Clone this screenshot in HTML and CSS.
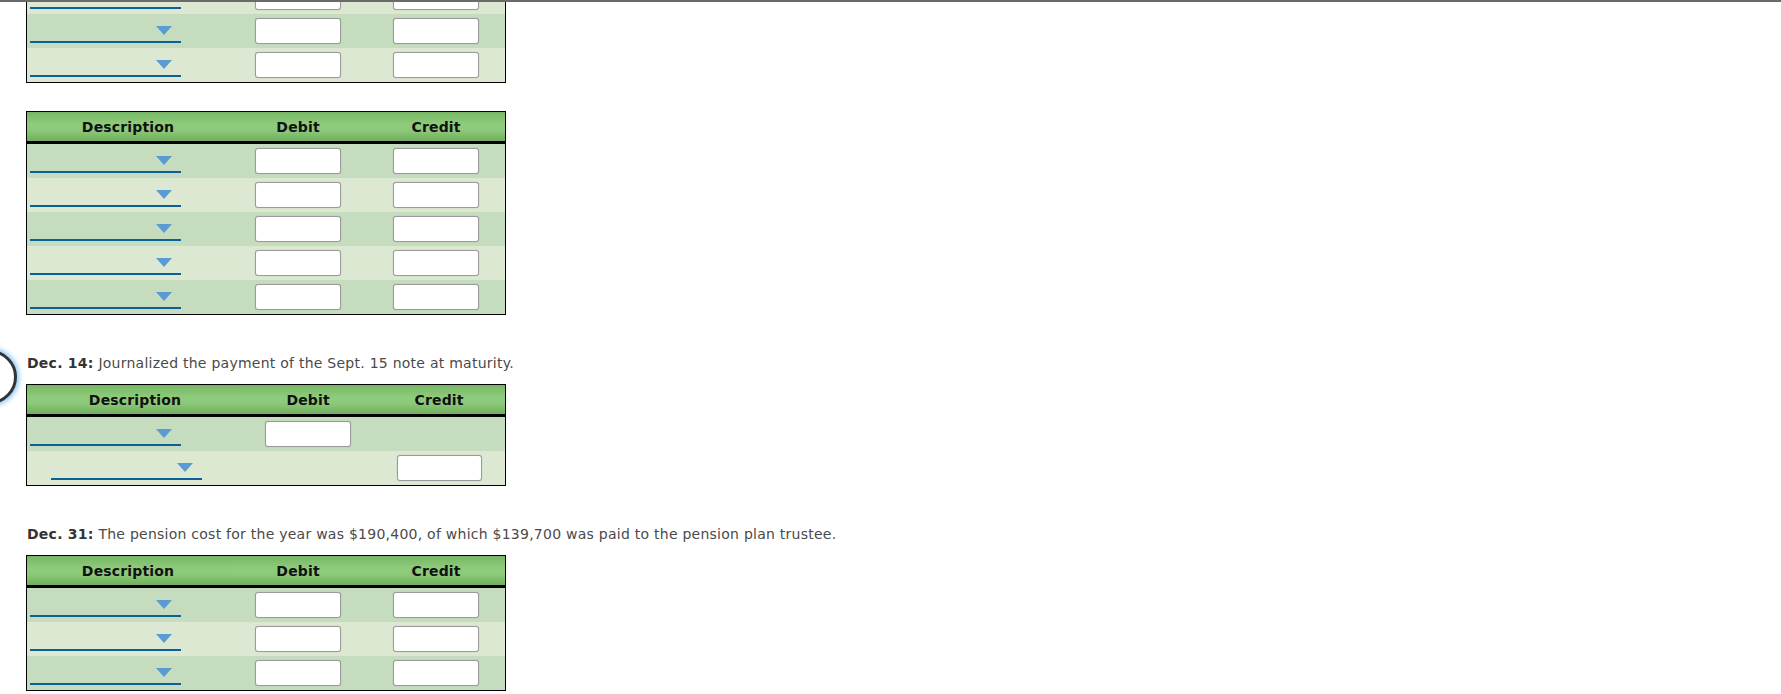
FILE: index.html
```html
<!DOCTYPE html>
<html>
<head>
<meta charset="utf-8">
<link rel="stylesheet" href="styles.css">
</head>
<body>
<div class="topline"></div>
<div class="page">
  <section class="entry first">
    <table class="journal">
      <colgroup><col class="c-desc"><col class="c-amt"><col class="c-amt"></colgroup>
      <tbody>
        <tr class="dark"><td class="desc"><div class="dd"><span class="arrow"></span></div></td><td><div class="inp"></div></td><td><div class="inp"></div></td></tr>
        <tr class="light"><td class="desc"><div class="dd"><span class="arrow"></span></div></td><td><div class="inp"></div></td><td><div class="inp"></div></td></tr>
        <tr class="dark"><td class="desc"><div class="dd"><span class="arrow"></span></div></td><td><div class="inp"></div></td><td><div class="inp"></div></td></tr>
        <tr class="light"><td class="desc"><div class="dd"><span class="arrow"></span></div></td><td><div class="inp"></div></td><td><div class="inp"></div></td></tr>
      </tbody>
    </table>
  </section>

  <section class="entry gap-small">
    <table class="journal">
      <colgroup><col class="c-desc"><col class="c-amt"><col class="c-amt"></colgroup>
      <thead><tr><th>Description</th><th>Debit</th><th>Credit</th></tr></thead>
      <tbody>
        <tr class="dark"><td class="desc"><div class="dd"><span class="arrow"></span></div></td><td><div class="inp"></div></td><td><div class="inp"></div></td></tr>
        <tr class="light"><td class="desc"><div class="dd"><span class="arrow"></span></div></td><td><div class="inp"></div></td><td><div class="inp"></div></td></tr>
        <tr class="dark"><td class="desc"><div class="dd"><span class="arrow"></span></div></td><td><div class="inp"></div></td><td><div class="inp"></div></td></tr>
        <tr class="light"><td class="desc"><div class="dd"><span class="arrow"></span></div></td><td><div class="inp"></div></td><td><div class="inp"></div></td></tr>
        <tr class="dark"><td class="desc"><div class="dd"><span class="arrow"></span></div></td><td><div class="inp"></div></td><td><div class="inp"></div></td></tr>
      </tbody>
    </table>
  </section>

  <section class="entry gap-large with-marker">
    <div class="marker"></div>
    <p class="prompt"><b>Dec. 14:</b> Journalized the payment of the Sept. 15 note at maturity.</p>
    <table class="journal alt">
      <colgroup><col class="c-desc2"><col class="c-amt2"><col class="c-amt3"></colgroup>
      <thead><tr><th>Description</th><th>Debit</th><th>Credit</th></tr></thead>
      <tbody>
        <tr class="dark"><td class="desc"><div class="dd"><span class="arrow"></span></div></td><td><div class="inp"></div></td><td></td></tr>
        <tr class="light"><td class="desc indent"><div class="dd"><span class="arrow"></span></div></td><td></td><td><div class="inp narrow"></div></td></tr>
      </tbody>
    </table>
  </section>

  <section class="entry gap-large">
    <p class="prompt"><b>Dec. 31:</b> The pension cost for the year was $190,400, of which $139,700 was paid to the pension plan trustee.</p>
    <table class="journal">
      <colgroup><col class="c-desc"><col class="c-amt"><col class="c-amt"></colgroup>
      <thead><tr><th>Description</th><th>Debit</th><th>Credit</th></tr></thead>
      <tbody>
        <tr class="dark"><td class="desc"><div class="dd"><span class="arrow"></span></div></td><td><div class="inp"></div></td><td><div class="inp"></div></td></tr>
        <tr class="light"><td class="desc"><div class="dd"><span class="arrow"></span></div></td><td><div class="inp"></div></td><td><div class="inp"></div></td></tr>
        <tr class="dark"><td class="desc"><div class="dd"><span class="arrow"></span></div></td><td><div class="inp"></div></td><td><div class="inp"></div></td></tr>
      </tbody>
    </table>
  </section>
</div>
</body>
</html>
```

FILE: styles.css
```css
html, body {
  margin: 0;
  padding: 0;
  background: #ffffff;
  overflow: hidden;
}
body {
  font-family: "DejaVu Sans", Verdana, sans-serif;
  font-size: 14px;
  color: #444;
}
.topline {
  position: fixed;
  top: 0;
  left: 0;
  right: 0;
  height: 2px;
  background: #6a6a6a;
  z-index: 5;
}
.page {
  padding-left: 26px;
  margin-top: -55px;
}
.entry {
  position: relative;
}
.gap-small { margin-top: 28px; }
.gap-large { margin-top: 39px; }
.prompt {
  margin: 0 0 12px 1px;
  line-height: 18px;
  font-size: 14px;
  letter-spacing: 0.25px;
  color: #4a4a4a;
  white-space: nowrap;
}
.prompt b {
  color: #333;
}
.marker {
  position: absolute;
  left: -63px;
  top: -4px;
  width: 48px;
  height: 48px;
  border: 3px solid #333;
  border-radius: 50%;
  background: #fff;
  box-shadow: 0 0 5px 2px rgba(90, 175, 240, 0.75);
}
.journal {
  border-collapse: collapse;
  border: 1px solid #000;
  width: 480px;
  table-layout: fixed;
}
.c-desc { width: 202px; }
.c-amt { width: 138px; }
.c-desc2 { width: 216px; }
.c-amt2 { width: 130px; }
.c-amt3 { width: 132px; }
.journal th {
  height: 29px;
  padding: 0;
  font-weight: bold;
  font-size: 14px;
  letter-spacing: 0.15px;
  color: #111;
  text-align: center;
  background: linear-gradient(to bottom, #78b866 0%, #8ecb7b 40%, #8dca79 60%, #6fae5d 100%);
  border-bottom: 3px solid #000;
}
.journal td {
  height: 34px;
  padding: 0;
  text-align: center;
  vertical-align: middle;
}
.journal tr.dark td { background: #c5ddbe; }
.journal tr.light td { background: #dce8d2; }
.journal td.desc {
  height: 29px;
  text-align: left;
  vertical-align: bottom;
  padding: 0 0 5px 3px;
}
.journal td.desc.indent {
  padding-left: 24px;
}
.dd {
  width: 151px;
  height: 15px;
  border-bottom: 2px solid #0d5f98;
  display: flex;
  justify-content: flex-end;
  align-items: flex-end;
  padding-bottom: 6px;
  box-sizing: content-box;
}
.arrow {
  width: 0;
  height: 0;
  margin-right: 9px;
  border-left: 8.5px solid transparent;
  border-right: 8.5px solid transparent;
  border-top: 9px solid #5b9bd3;
}
.inp {
  display: inline-block;
  vertical-align: middle;
  width: 86px;
  height: 26px;
  box-sizing: border-box;
  background: #fff;
  border: 1px solid #9a9a9a;
  border-radius: 3px;
  box-shadow: 0 0 1px rgba(0, 0, 0, 0.25);
}
.inp.narrow { width: 85px; }
```
